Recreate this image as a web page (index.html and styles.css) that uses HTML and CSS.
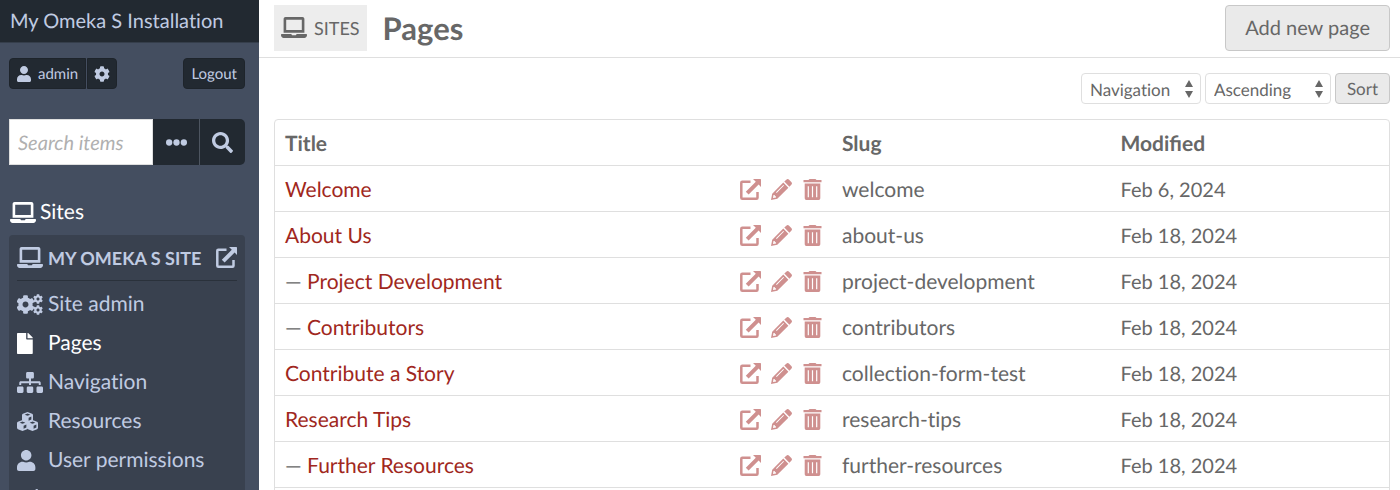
FILE: index.html
```html
<!DOCTYPE html>
<html lang="en">
<head>
<meta charset="utf-8">
<title>Pages · My Omeka S Installation</title>
<link rel="stylesheet" href="styles.css">
</head>
<body>
<svg class="sprite" aria-hidden="true">
  <symbol id="laptop" viewBox="0 0 640 512"><path d="M624 416H381.540c-.74 19.810-14.710 32-32.740 32H288c-18.690 0-33.020-17.470-32.770-32H16c-8.800 0-16 7.200-16 16v16c0 35.200 28.800 64 64 64h512c35.200 0 64-28.800 64-64v-16c0-8.800-7.200-16-16-16zM576 48c0-26.400-21.600-48-48-48H112C85.600 0 64 21.600 64 48v336h512V48zm-64 272H128V64h384v256z"/></symbol>
  <symbol id="user" viewBox="0 0 448 512" preserveAspectRatio="xMinYMid"><path d="M224 256c70.700 0 128-57.300 128-128S294.700 0 224 0 96 57.300 96 128s57.300 128 128 128zm89.600 32h-16.700c-22.200 10.200-46.900 16-72.900 16s-50.600-5.800-72.900-16h-16.700C60.200 288 0 348.200 0 422.400V464c0 26.500 21.500 48 48 48h352c26.500 0 48-21.500 48-48v-41.600c0-74.200-60.200-134.400-134.400-134.400z"/></symbol>
  <symbol id="cog" viewBox="0 0 512 512"><path d="M487.400 315.700l-42.600-24.600c4.300-23.200 4.300-47 0-70.200l42.600-24.600c4.900-2.800 7.100-8.600 5.500-14-11.100-35.600-30-67.800-54.700-94.600-3.800-4.100-10-5.100-14.800-2.300L380.800 110c-17.900-15.400-38.500-27.300-60.800-35.100V25.800c0-5.600-3.900-10.500-9.400-11.700-36.700-8.200-74.300-7.800-109.200 0-5.500 1.200-9.400 6.100-9.400 11.700V75c-22.200 7.900-42.800 19.800-60.800 35.100L88.700 85.500c-4.900-2.800-11-1.900-14.800 2.300-24.700 26.700-43.600 58.900-54.700 94.600-1.700 5.400.6 11.200 5.500 14L67.300 221c-4.300 23.200-4.300 47 0 70.200l-42.600 24.600c-4.900 2.800-7.100 8.600-5.500 14 11.100 35.600 30 67.800 54.700 94.600 3.800 4.100 10 5.100 14.800 2.300l42.600-24.600c17.900 15.400 38.500 27.300 60.800 35.100v49.200c0 5.600 3.900 10.500 9.400 11.700 36.700 8.200 74.300 7.800 109.200 0 5.500-1.200 9.400-6.100 9.400-11.700v-49.200c22.200-7.900 42.800-19.800 60.800-35.100l42.600 24.600c4.900 2.800 11 1.900 14.800-2.300 24.700-26.700 43.600-58.900 54.700-94.600 1.500-5.500-.7-11.300-5.600-14.100zM256 336c-44.100 0-80-35.900-80-80s35.900-80 80-80 80 35.900 80 80-35.900 80-80 80z"/></symbol>
  <symbol id="cogs" viewBox="0 0 26 21"><use href="#cog" x="-1" y="1" width="19" height="19"/><use href="#cog" x="16" y="0" width="10" height="10"/><use href="#cog" x="16" y="11" width="10" height="10"/></symbol>
  <symbol id="search" viewBox="0 0 512 512"><path d="M505 442.700L405.300 343c-4.500-4.500-10.600-7-17-7H372c27.600-35.300 44-79.700 44-128C416 93.100 322.900 0 208 0S0 93.100 0 208s93.100 208 208 208c48.300 0 92.700-16.400 128-44v16.300c0 6.400 2.500 12.500 7 17l99.700 99.700c9.400 9.400 24.600 9.400 33.900 0l28.300-28.300c9.400-9.400 9.400-24.600.1-34zM208 336c-70.700 0-128-57.200-128-128 0-70.700 57.200-128 128-128 70.700 0 128 57.200 128 128 0 70.700-57.200 128-128 128z"/></symbol>
  <symbol id="dots" viewBox="0 0 20 20"><circle cx="3" cy="10" r="3"/><circle cx="10" cy="10" r="3"/><circle cx="17" cy="10" r="3"/></symbol>
  <symbol id="file" viewBox="0 0 384 512" preserveAspectRatio="xMinYMid"><path d="M224 136V0H24C10.700 0 0 10.700 0 24v464c0 13.300 10.700 24 24 24h336c13.300 0 24-10.700 24-24V160H248c-13.200 0-24-10.800-24-24zm160-14.100v6.100H256V0h6.100c6.400 0 12.500 2.500 17 7l97.900 98c4.500 4.500 7 10.600 7 16.900z"/></symbol>
  <symbol id="sitemap" viewBox="0 0 640 512"><path d="M128 352H32c-17.670 0-32 14.330-32 32v96c0 17.670 14.330 32 32 32h96c17.670 0 32-14.330 32-32v-96c0-17.670-14.330-32-32-32zm-24-80h192v48h48v-48h192v48h48v-57.590c0-21.170-17.230-38.410-38.410-38.410H344v-64h40c17.670 0 32-14.330 32-32V32c0-17.670-14.330-32-32-32H256c-17.670 0-32 14.330-32 32v96c0 17.670 14.330 32 32 32h40v64H94.410C73.230 224 56 241.230 56 262.410V320h48v-48zm264 80h-96c-17.670 0-32 14.330-32 32v96c0 17.670 14.330 32 32 32h96c17.670 0 32-14.330 32-32v-96c0-17.670-14.330-32-32-32zm240 0h-96c-17.670 0-32 14.330-32 32v96c0 17.670 14.330 32 32 32h96c17.670 0 32-14.330 32-32v-96c0-17.670-14.330-32-32-32z"/></symbol>
  <symbol id="cube" viewBox="0 0 12 12"><path fill-rule="evenodd" d="M6 0 11 2Q12 2.400 12 3.500V8.500Q12 9.500 11 10L6 12 1 10Q0 9.500 0 8.500V3.500Q0 2.400 1 2ZM6 1.600 2.900 2.900 6 4.200 9.100 2.900ZM7.200 6.200V9.600L10.200 8.300V5Z"/></symbol>
  <symbol id="cubes" viewBox="0 0 21 21" preserveAspectRatio="xMinYMid"><use href="#cube" x="5" y="1" width="11" height="11"/><use href="#cube" x="0" y="9" width="11" height="11"/><use href="#cube" x="10" y="9" width="11" height="11"/></symbol>
  <symbol id="external" viewBox="0 0 21 21"><path d="M10.500 2.700H2.300Q1.300 2.700 1.300 3.700V18.700Q1.300 19.700 2.300 19.700H16.500Q17.500 19.700 17.500 18.700V13" fill="none" stroke="currentColor" stroke-width="2.500"/><path d="M13 0H20.300Q21 0 21 .7V8L18.600 5.600 8.600 15.600 5.800 12.800 15.800 2.800Z"/></symbol>
  <symbol id="pencil" viewBox="0 0 21 21"><path fill-rule="evenodd" d="M12.300 3.600 17.400 8.700 6.300 19.800 0 21 1.200 14.700ZM12.300 5.900 5 13.200 5.700 13.900 13 6.600ZM2.500 16 2 19 5 18.500V17.200H3.800V16Z"/><path d="M13.300 2.600 15.300.7Q16.700-.7 18.100.7L20.300 2.900Q21.700 4.300 20.300 5.700L18.400 7.700Z"/></symbol>
  <symbol id="trash" viewBox="0 0 18 21"><path fill-rule="evenodd" d="M5 1 6 0H12L13 1H18V3.200H0V1ZM1.200 4.500H16.800V19.300Q16.800 21 15.200 21H2.800Q1.200 21 1.200 19.300ZM4.200 7.200V18.200H5.400V7.200ZM8.400 7.200V18.200H9.600V7.200ZM12.600 7.200V18.200H13.800V7.200Z"/></symbol>
  <symbol id="brush" viewBox="0 0 21 21" preserveAspectRatio="xMinYMid"><path d="M19 .3C20.600-.6 21.700.8 20.700 2.300L13.500 12.500 8.800 8.500ZM7.600 9.800 12.300 13.800C12.600 19 7 21.500 0 19 3 17 3 11 7.600 9.800Z"/></symbol>
  <symbol id="updown" viewBox="0 0 8 18"><path d="M4 0 8 7H0ZM0 11H8L4 18Z"/></symbol>
</svg>
<div class="app">
  <aside class="sidebar">
    <a class="brand" href="#">My Omeka S Installation</a>
    <div class="account">
      <div class="user-links">
        <a class="dark-button user-name" href="#"><svg class="icon-user"><use href="#user"/></svg>admin</a>
        <a class="dark-button user-settings" href="#" aria-label="Settings"><svg class="icon-cog"><use href="#cog"/></svg></a>
      </div>
      <a class="dark-button logout" href="#">Logout</a>
    </div>
    <form class="search">
      <input type="text" aria-label="Search items" placeholder="Search items">
      <button type="button" aria-label="Advanced search"><svg class="icon-m"><use href="#dots"/></svg></button>
      <button type="button" aria-label="Search"><svg class="icon-m"><use href="#search"/></svg></button>
    </form>
    <a class="section" href="#"><svg class="icon-wide"><use href="#laptop"/></svg>Sites</a>
    <nav class="site-nav">
      <div class="site-title">
        <svg class="icon-wide"><use href="#laptop"/></svg><span>MY OMEKA S SITE</span>
        <a href="#" aria-label="View site"><svg class="icon-m"><use href="#external"/></svg></a>
      </div>
      <a href="#"><svg class="icon-wide"><use href="#cogs"/></svg>Site admin</a>
      <a class="active" href="#"><svg class="icon-wide"><use href="#file"/></svg>Pages</a>
      <a href="#"><svg class="icon-wide"><use href="#sitemap"/></svg>Navigation</a>
      <a href="#"><svg class="icon-wide"><use href="#cubes"/></svg>Resources</a>
      <a href="#"><svg class="icon-wide"><use href="#user"/></svg>User permissions</a>
      <a href="#"><svg class="icon-wide"><use href="#brush"/></svg>Theme</a>
    </nav>
  </aside>
  <main class="content">
    <header class="page-head">
      <a class="crumb" href="#"><svg class="icon-wide"><use href="#laptop"/></svg>SITES</a>
      <h1>Pages</h1>
      <button class="add" type="button">Add new page</button>
    </header>
    <form class="sorting">
      <label class="picker sort-by"><select aria-label="Sort by"><option>Navigation</option></select><svg><use href="#updown"/></svg></label>
      <label class="picker sort-order"><select aria-label="Sort order"><option>Ascending</option></select><svg><use href="#updown"/></svg></label>
      <button type="button">Sort</button>
    </form>
    <div class="table-frame">
      <table>
        <thead><tr><th class="title-col">Title</th><th>Slug</th><th>Modified</th></tr></thead>
        <tbody id="rows"></tbody>
      </table>
    </div>
  </main>
</div>
<script src="pages.js"></script>
</body>
</html>
```
FILE: pages.js
```js
const pages = [
  ["Welcome", "welcome", "Feb 6, 2024", 0],
  ["About Us", "about-us", "Feb 18, 2024", 0],
  ["Project Development", "project-development", "Feb 18, 2024", 1],
  ["Contributors", "contributors", "Feb 18, 2024", 1],
  ["Contribute a Story", "collection-form-test", "Feb 18, 2024", 0],
  ["Research Tips", "research-tips", "Feb 18, 2024", 0],
  ["Further Resources", "further-resources", "Feb 18, 2024", 1]
];
const action = (icon, label) =>
  `<a href="#" aria-label="${label}"><svg class="icon-m"><use href="#${icon}"/></svg></a>`;
document.getElementById("rows").innerHTML = pages.map(([title, slug, date, depth]) => `
  <tr>
    <td><div class="title-cell"><span>${"— ".repeat(depth)}<a href="#">${title}</a></span>
      <span class="actions">${action("external", "View")}${action("pencil", "Edit")}${action("trash", "Delete")}</span></div></td>
    <td>${slug}</td><td class="date">${date}</td>
  </tr>`).join("");
```
FILE: styles.css
```css
* { box-sizing: border-box; }
body {
  margin: 0;
  font: 21px/26px Lato, sans-serif;
  font-variant-ligatures: no-common-ligatures;
  text-rendering: geometricPrecision;
  color: #676767;
  background: #fff;
}
a { color: inherit; text-decoration: none; }
button, input, select {
  font: inherit;
  font-variant-ligatures: inherit;
  text-rendering: inherit;
  color: inherit;
  margin: 0;
}
svg { fill: currentColor; display: block; flex: none; }
.sprite { position: absolute; width: 0; height: 0; }
.icon-wide { width: 26px; height: 21px; }
.icon-m { width: 21px; height: 21px; }

.app { display: flex; height: 100vh; overflow: hidden; }
.sidebar { flex: 0 0 259px; background: #444e60; color: #c0cbe2; overflow: hidden; }
.brand {
  display: block;
  padding: 8px 10px;
  background: #222931;
  border-bottom: 1px solid #353e4b;
  font-size: 20px;
}
.account { display: flex; justify-content: space-between; padding: 15px 14px 0 9px; font-size: 15px; }
.user-links { display: flex; gap: 1px; }
.dark-button {
  display: flex;
  align-items: center;
  height: 31px;
  padding: 0 7px;
  background: #222931;
  border: 1px solid #1e242b;
  border-radius: 4px;
}
.user-name { gap: 7px; border-radius: 4px 0 0 4px; }
.user-settings { padding: 0 6px; border-radius: 0 4px 4px 0; }
.icon-user { width: 14px; height: 16px; }
.icon-cog { width: 16px; height: 16px; }

.search { display: flex; height: 46px; margin: 30px 14px 0 9px; }
.search input {
  flex: 1;
  min-width: 0;
  padding: 2px 8px 0;
  border: 1px solid #dfdfdf;
  border-radius: 0;
  background: #fff;
  font-size: 20px;
  font-style: italic;
}
.search input::placeholder { color: #b0b0b0; opacity: 1; }
.search button {
  flex: 0 0 46px;
  display: grid;
  place-items: center;
  padding: 0;
  border: 0;
  background: #222931;
}
.search button:last-child { border-left: 1px solid #4d5560; border-radius: 0 5px 5px 0; }

.section { display: flex; align-items: center; gap: 4px; margin: 34px 10px 0; color: #fff; }
.site-nav {
  margin: 10px 14px 0 9px;
  padding: 0 8px;
  background: #39414f;
  border-radius: 4px;
}
.site-nav > a { display: flex; align-items: center; gap: 5px; margin-bottom: 13px; }
.site-nav .active { color: #fff; }
.site-title {
  display: flex;
  align-items: center;
  gap: 5px;
  height: 46px;
  margin-bottom: 10px;
  border-bottom: 1px solid #2a313b;
  font-size: 18px;
  font-weight: 700;
}
.site-title a { margin-left: auto; }

.content { flex: 1; min-width: 0; }
.page-head {
  display: flex;
  align-items: center;
  height: 58px;
  padding: 0 10px 2px 15px;
  border-bottom: 1px solid #dfdfdf;
}
.crumb {
  display: flex;
  align-items: center;
  gap: 7px;
  height: 46px;
  padding: 0 7px;
  background: #ededed;
  font-size: 18px;
}
h1 { margin: 0 auto 0 16px; font-size: 31px; line-height: 36px; font-weight: 700; }
.add { height: 46px; padding: 0 19px; background: #eaeaea; border: 1px solid #c8c8c8; border-radius: 4px; font-size: 20px; }

.sorting { display: flex; justify-content: flex-end; gap: 4px; padding: 15px 10px 0; font-size: 17px; }
.picker { position: relative; height: 31px; }
.picker select {
  width: 100%;
  height: 31px;
  padding: 2px 8px 0;
  appearance: none;
  background: #fff;
  border: 1px solid #dfdfdf;
  border-radius: 4px;
}
.picker svg { position: absolute; right: 8px; top: 7px; width: 8px; height: 18px; pointer-events: none; }
.sort-by { width: 120px; }
.sort-order { width: 126px; }
.sorting button { height: 31px; padding: 0 11px; background: #eaeaea; border: 1px solid #c8c8c8; border-radius: 4px; }

.table-frame { margin: 15px 10px 0 15px; border: 1px solid #dfdfdf; border-radius: 4px; min-height: 400px; }
table { width: 100%; border-collapse: collapse; table-layout: fixed; }
th, td { height: 46px; padding: 4px 10px 0; text-align: left; border-bottom: 1px solid #dfdfdf; }
th { height: 45px; font-variant-ligatures: normal; }
.title-col { width: 50%; }
.title-cell { display: flex; justify-content: space-between; align-items: center; }
.title-cell a { color: #a02720; }
td:first-child { padding-right: 9px; }
.date { font-size: 20px; }
.actions { display: flex; gap: 10px; padding-bottom: 2px; }
.title-cell .actions a { color: #cf908f; }
```
